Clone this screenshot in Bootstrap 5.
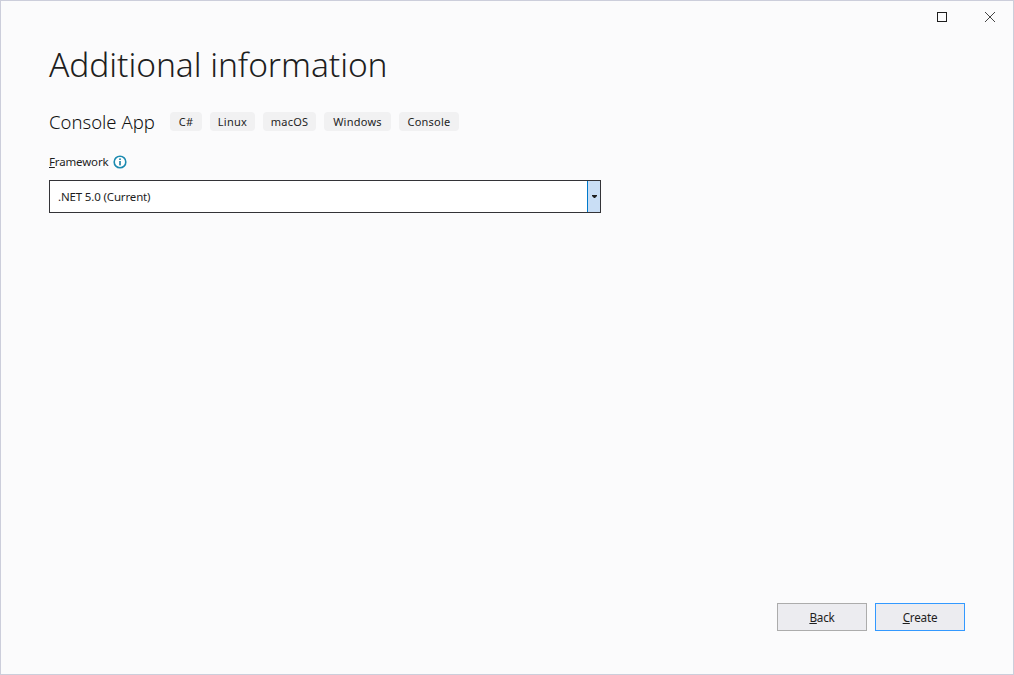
<!DOCTYPE html>
<html lang="en">
<head>
<meta charset="utf-8">
<title>Additional information</title>
<link href="https://cdn.jsdelivr.net/npm/bootstrap@5.3.0/dist/css/bootstrap.min.css" rel="stylesheet">
<style>
html, body { height: 100%; }
body { background: #fbfbfc; color: #1e1e1e; font-family: "Noto Sans", "Open Sans", sans-serif; font-size: 12px; }
.win-frame { height: 675px; border: 1px solid #ccceDB; padding: 0 48px 0 48px; }
.win-ctrl { height: 33px; margin-right: -48px; padding: 10px 17px 0 0; gap: 36px; }
.win-ctrl svg { display: block; }
.dlg-title { font-size: 33.5px; font-weight: 300; line-height: 44px; margin: 8px 0 0; letter-spacing: -.05px; color: #1e1e1e; }
.tmpl-row { margin-top: 25px; height: 20px; }
.tmpl-name { font-size: 18.5px; font-weight: 300; color: #111; line-height: 22px; height: 20px; width: 113px; }
.chip-tag { background: #f1f1f2; border-radius: 4px; height: 19px; line-height: 19px; font-size: 11px; text-align: center; letter-spacing: .25px; }
.fw-label { margin-top: 22px; height: 18px; line-height: 18px; gap: 5px; }
.fw-label span { font-size: 11.5px; width: 59px; white-space: nowrap; letter-spacing: -.15px; }
.combo-box { margin-top: 9px; width: 552px; height: 33px; border: 1px solid #333337; background: #fff; }
.combo-val { padding-left: 8px; line-height: 31px; font-size: 11.5px; letter-spacing: -.15px; }
.combo-arrow { width: 13px; background: #c9def5; border-left: 1px solid #007acc; }
.foot-btns { margin-top: auto; padding-bottom: 43px; gap: 8px; }
.act-btn { width: 90px; height: 28px; padding: 0; border-radius: 0; background: #ececf0; border: 1px solid #acacac; color: #1e1e1e; font-size: 11.7px; line-height: 24px; letter-spacing: -.2px; }
.act-btn.is-default { border-color: #3399ff; }
.act-btn:hover { background: #ececf0; border-color: #acacac; color: #1e1e1e; }
</style>
</head>
<body>
<div class="win-frame d-flex flex-column">
  <div class="win-ctrl d-flex justify-content-end align-items-start">
    <svg width="12" height="12" viewBox="0 0 12 12" aria-label="Maximize"><rect x="1.5" y="1.5" width="9" height="9" fill="none" stroke="#1e1e1e" stroke-width="1"/></svg>
    <svg width="12" height="12" viewBox="0 0 12 12" aria-label="Close"><path d="M1 1 L11 11 M11 1 L1 11" fill="none" stroke="#444" stroke-width="1"/></svg>
  </div>
  <h1 class="dlg-title">Additional information</h1>
  <div class="tmpl-row d-flex align-items-center gap-2">
    <div class="tmpl-name text-nowrap">Console App</div>
    <div class="chip-tag" style="width:32px">C#</div>
    <div class="chip-tag" style="width:45px">Linux</div>
    <div class="chip-tag" style="width:53px">macOS</div>
    <div class="chip-tag" style="width:67px">Windows</div>
    <div class="chip-tag" style="width:60px">Console</div>
  </div>
  <div class="fw-label d-flex align-items-center">
    <span><u>F</u>ramework</span>
    <svg width="14" height="14" viewBox="0 0 14 14" aria-label="Info"><circle cx="7" cy="7" r="5.8" fill="#fff" stroke="#1b8ab0" stroke-width="1.6"/><rect x="6.2" y="6" width="1.6" height="4.4" fill="#1b7fa3"/><rect x="6.2" y="3.4" width="1.6" height="1.6" fill="#1b7fa3"/></svg>
  </div>
  <div class="combo-box d-flex">
    <div class="combo-val flex-grow-1">.NET 5.0 (Current)</div>
    <div class="combo-arrow d-flex align-items-center justify-content-center">
      <svg width="5" height="3" viewBox="0 0 5 3"><path d="M0 0 H5 V1 L3 3 H2 L0 1 Z" fill="#1e1e1e"/></svg>
    </div>
  </div>
  <div class="foot-btns d-flex justify-content-end">
    <button type="button" class="btn act-btn"><u>B</u>ack</button>
    <button type="button" class="btn act-btn is-default"><u>C</u>reate</button>
  </div>
</div>
<script src="https://cdn.jsdelivr.net/npm/bootstrap@5.3.0/dist/js/bootstrap.bundle.min.js"></script>
</body>
</html>
